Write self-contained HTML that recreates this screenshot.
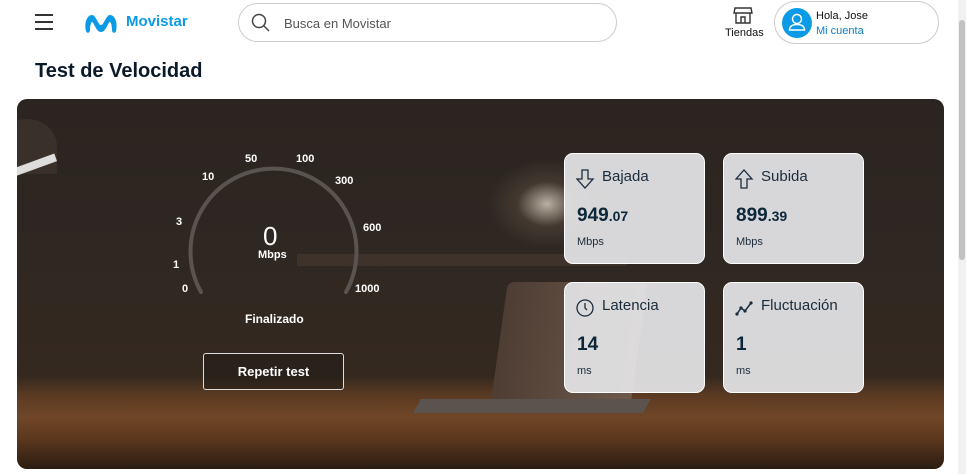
<!DOCTYPE html>
<html><head><meta charset="utf-8"><style>
*{margin:0;padding:0;box-sizing:border-box}
body{width:966px;height:474px;overflow:hidden;background:#fff;font-family:"Liberation Sans",sans-serif;position:relative;color:#0b2739}
.sb{position:absolute;right:0;top:0;width:8px;height:474px;background:#f1f1f1}
.sb i{position:absolute;left:1px;top:20px;width:6px;height:240px;background:#c1c1c1;border-radius:3px}
.hdr{position:absolute;left:0;top:0;width:958px;height:44px}
.burger{position:absolute;left:35px;top:14px;width:18px}
.burger b{display:block;height:2px;background:#333;margin-bottom:5px}
.logo{position:absolute;left:83px;top:11px}
.brand{position:absolute;left:126px;top:13px;font-size:15px;font-weight:bold;color:#0b9be6}
.search{position:absolute;left:238px;top:3px;width:379px;height:39px;border:1px solid #ccc;border-radius:20px}
.search span{position:absolute;left:45px;top:12px;font-size:13px;color:#555}
.tiendas{position:absolute;left:725px;top:27px;font-size:11px;color:#111}
.acct{position:absolute;left:774px;top:1px;width:165px;height:43px;border:1px solid #ccc;border-radius:22px}
.av{position:absolute;left:7px;top:6px;width:30px;height:30px;border-radius:50%;background:#0b9be6}
.acct .h{position:absolute;left:41px;top:8px;font-size:11px;color:#111}
.acct .m{position:absolute;left:41px;top:23px;font-size:11px;color:#0b7dc0}
h1{position:absolute;left:35px;top:60px;font-size:20px;font-weight:bold;color:#0b1a2a}
.panel{position:absolute;left:17px;top:99px;width:927px;height:370px;border-radius:10px;overflow:hidden;
background:linear-gradient(180deg,#2b2420 0%,#2e2722 40%,#35291f 75%,#5a3a22 80%,#704628 86%,#5b371d 92%,#2a1c12 100%)}
.glow{position:absolute;left:470px;top:60px;width:120px;height:90px;background:radial-gradient(ellipse,rgba(220,210,195,.8) 0%,rgba(120,100,80,.3) 35%,transparent 70%)}
.lamp{position:absolute;left:-20px;top:20px;width:60px;height:55px;background:#3a302a;border-radius:50% 50% 0 0}
.lamp2{position:absolute;left:-5px;top:62px;width:45px;height:8px;background:#ddd;transform:rotate(-20deg)}
.shelf{position:absolute;left:280px;top:155px;width:330px;height:12px;background:#4a3b30;opacity:.6}
.laptop{position:absolute;left:482px;top:183px;width:140px;height:125px;background:linear-gradient(90deg,#4e3d33,#6e5a4d);transform:skewX(-8deg);border-radius:6px}
.lbase{position:absolute;left:400px;top:300px;width:230px;height:14px;background:#5a534e;transform:skewX(-30deg)}
.g{position:absolute;color:#fff;font-size:11px;font-weight:bold}
.card{position:absolute;width:141px;height:111px;background:rgba(228,228,230,.93);border-radius:9px;border:1px solid #fff}
.card .t{position:absolute;left:37px;top:14px;font-size:15px;color:#1b2c3c}
.card .v{position:absolute;left:12px;top:51px;font-size:19px;font-weight:bold;color:#0b2739}
.card .v small{font-size:14px}
.card .u{position:absolute;left:12px;top:82px;font-size:11px;color:#1b2c3c}
.card svg{position:absolute;left:11px;top:14px}
.btn{position:absolute;left:186px;top:254px;width:141px;height:37px;border:1px solid #ddd;border-radius:3px;color:#fff;font-size:13px;font-weight:bold;text-align:center;line-height:35px;background:rgba(30,25,22,.5)}
</style></head><body>
<div class="sb"><i></i></div>
<div class="hdr">
<div class="burger"><b></b><b></b><b></b></div>
<svg class="logo" width="36" height="24" viewBox="0 0 36 24"><path d="M3 20 C1 12 4 4 9 4 C13 4 15 14 18 14 C21 14 23 4 27 4 C32 4 35 12 33 20 C32 23 29 22 29 19 C29 15 28 11 27 11 C25 11 23 21 18 21 C13 21 11 11 9 11 C8 11 7 15 7 19 C7 22 4 23 3 20Z" fill="#0b9be6"/></svg>
<div class="brand">Movistar</div>
<div class="search"><svg style="position:absolute;left:12px;top:9px" width="20" height="20" viewBox="0 0 20 20"><circle cx="8" cy="8" r="6.5" fill="none" stroke="#444" stroke-width="1.5"/><path d="M13 13l5 5" stroke="#444" stroke-width="1.5"/></svg><span>Busca en Movistar</span></div>
<svg style="position:absolute;left:733px;top:7px" width="20" height="17" viewBox="0 0 20 17"><path d="M2 1h16l1 5H1z M3 6v10h14V6 M8 16v-6h4v6" fill="none" stroke="#333" stroke-width="1.4"/></svg>
<div class="tiendas">Tiendas</div>
<div class="acct"><div class="av"><svg width="30" height="30" viewBox="0 0 30 30"><circle cx="15" cy="11" r="4.5" fill="none" stroke="#fff" stroke-width="1.5"/><path d="M7.5 22c0-4 3.5-5.5 7.5-5.5s7.5 1.5 7.5 5.5z" fill="none" stroke="#fff" stroke-width="1.5"/></svg></div><div class="h">Hola, Jose</div><div class="m">Mi cuenta</div></div>
</div>
<h1>Test de Velocidad</h1>
<div class="panel">
<div class="shelf"></div><div class="glow"></div><div class="lamp"></div><div class="lamp2"></div>
<div class="laptop"></div><div class="lbase"></div>
<svg style="position:absolute;left:0;top:0" width="927" height="370"><path d="M184 193 A83 83 0 1 1 329 193" fill="none" stroke="#5a5450" stroke-width="4" stroke-linecap="round"/></svg>
<div class="g" style="left:228px;top:54px">50</div>
<div class="g" style="left:279px;top:54px">100</div>
<div class="g" style="left:185px;top:72px">10</div>
<div class="g" style="left:318px;top:76px">300</div>
<div class="g" style="left:159px;top:117px">3</div>
<div class="g" style="left:346px;top:123px">600</div>
<div class="g" style="left:156px;top:160px">1</div>
<div class="g" style="left:165px;top:184px">0</div>
<div class="g" style="left:338px;top:184px">1000</div>
<div class="g" style="left:246px;top:122px;font-size:26px;font-weight:normal">0</div>
<div class="g" style="left:241px;top:150px">Mbps</div>
<div class="g" style="left:228px;top:213px;font-size:12px">Finalizado</div>
<div class="btn">Repetir test</div>
<div class="card" style="left:547px;top:54px"><svg width="20" height="22" viewBox="0 0 20 22"><path d="M6 2h6v9h5l-8 9-8-9h5z" fill="none" stroke="#1b2c3c" stroke-width="1.3"/></svg><div class="t">Bajada</div><div class="v">949<small>.07</small></div><div class="u">Mbps</div></div>
<div class="card" style="left:706px;top:54px"><svg width="20" height="22" viewBox="0 0 20 22"><path d="M6 20h6v-9h5L9 2 1 11h5z" fill="none" stroke="#1b2c3c" stroke-width="1.3"/></svg><div class="t">Subida</div><div class="v">899<small>.39</small></div><div class="u">Mbps</div></div>
<div class="card" style="left:547px;top:183px"><svg width="20" height="22" viewBox="0 0 20 22"><circle cx="9" cy="11" r="8" fill="none" stroke="#1b2c3c" stroke-width="1.3"/><path d="M9 6v5l2 2" fill="none" stroke="#1b2c3c" stroke-width="1.3"/></svg><div class="t">Latencia</div><div class="v">14</div><div class="u">ms</div></div>
<div class="card" style="left:706px;top:183px"><svg width="20" height="22" viewBox="0 0 20 22"><path d="M2 17l4-6 4 3 6-8" fill="none" stroke="#1b2c3c" stroke-width="1.5"/><circle cx="2" cy="17" r="1.6" fill="#1b2c3c"/><circle cx="6" cy="11" r="1.6" fill="#1b2c3c"/><circle cx="10" cy="14" r="1.6" fill="#1b2c3c"/><circle cx="16" cy="6" r="1.6" fill="#1b2c3c"/></svg><div class="t">Fluctuación</div><div class="v">1</div><div class="u">ms</div></div>
</div>
</body></html>
